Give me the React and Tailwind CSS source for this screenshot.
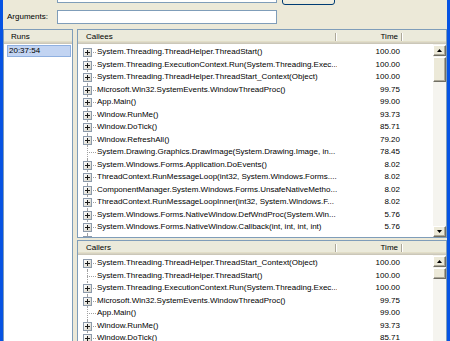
import React from 'react';

const callees = [
  { name: 'System.Threading.ThreadHelper.ThreadStart()', time: '100.00', kids: true },
  { name: 'System.Threading.ExecutionContext.Run(System.Threading.Exec...', time: '100.00', kids: true },
  { name: 'System.Threading.ThreadHelper.ThreadStart_Context(Object)', time: '100.00', kids: true },
  { name: 'Microsoft.Win32.SystemEvents.WindowThreadProc()', time: '99.75', kids: true },
  { name: 'App.Main()', time: '99.00', kids: true },
  { name: 'Window.RunMe()', time: '93.73', kids: true },
  { name: 'Window.DoTick()', time: '85.71', kids: true },
  { name: 'Window.RefreshAll()', time: '79.20', kids: true },
  { name: 'System.Drawing.Graphics.DrawImage(System.Drawing.Image, in...', time: '78.45', kids: false },
  { name: 'System.Windows.Forms.Application.DoEvents()', time: '8.02', kids: true },
  { name: 'ThreadContext.RunMessageLoop(int32, System.Windows.Forms....', time: '8.02', kids: true },
  { name: 'ComponentManager.System.Windows.Forms.UnsafeNativeMetho...', time: '8.02', kids: true },
  { name: 'ThreadContext.RunMessageLoopInner(int32, System.Windows.F...', time: '8.02', kids: true },
  { name: 'System.Windows.Forms.NativeWindow.DefWndProc(System.Win...', time: '5.76', kids: true },
  { name: 'System.Windows.Forms.NativeWindow.Callback(int, int, int, int)', time: '5.76', kids: true },
  { name: 'System.Windows.Forms.Form.DefWndProc(System.Windows.For...', time: '5.76', kids: true },
];

const callers = [
  { name: 'System.Threading.ThreadHelper.ThreadStart_Context(Object)', time: '100.00', kids: true },
  { name: 'System.Threading.ThreadHelper.ThreadStart()', time: '100.00', kids: false },
  { name: 'System.Threading.ExecutionContext.Run(System.Threading.Exec...', time: '100.00', kids: true },
  { name: 'Microsoft.Win32.SystemEvents.WindowThreadProc()', time: '99.75', kids: true },
  { name: 'App.Main()', time: '99.00', kids: false },
  { name: 'Window.RunMe()', time: '93.73', kids: true },
  { name: 'Window.DoTick()', time: '85.71', kids: true },
  { name: 'Window.RefreshAll()', time: '79.20', kids: true },
];

const PlusBox = () => (
  <div className="absolute left-[5px] top-[2px] h-[9px] w-[9px] border border-[#8c9aab] bg-linear-to-br from-white to-[#d6d3c6]">
    <div className="absolute left-[1px] top-[3px] h-px w-[5px] bg-[#1a1a1a]" />
    <div className="absolute left-[3px] top-[1px] h-[5px] w-px bg-[#1a1a1a]" />
  </div>
);

const TreeRow = ({ row, first }) => (
  <div className="relative flex h-[12.5px] items-center leading-[12.5px]">
    {/* tree lines */}
    <div
      className={
        first
          ? 'absolute bottom-0 left-[9px] top-[6px] border-l border-dotted border-[#a0a0a0]'
          : 'absolute bottom-0 left-[9px] top-0 border-l border-dotted border-[#a0a0a0]'
      }
    />
    <div className="absolute left-[9px] top-[6px] w-[9px] border-t border-dotted border-[#a0a0a0]" />
    {row.kids && <PlusBox />}
    <div className="ml-[19px] w-[240px] overflow-hidden whitespace-nowrap">{row.name}</div>
    <div className="w-[66px] pr-[3px] text-right">{row.time}</div>
  </div>
);

const Sep = () => (
  <div className="absolute right-0 top-[3px] bottom-[3px] w-[2px] border-l border-r border-l-[#aca899] border-r-white" />
);

const ListHeader = ({ title }) => (
  <div className="flex h-[14px] shrink-0 items-center bg-[#ebeadb] leading-none shadow-[inset_0_-1px_0_#cbc7b8,inset_0_-2px_0_#d6d2c2,inset_0_-3px_0_#e2dec8]">
    <div className="relative flex h-full w-[259px] items-center pl-[8px]">
      {title}
      <Sep />
    </div>
    <div className="relative flex h-full w-[66px] items-center justify-end pr-[5px]">
      Time
      <Sep />
    </div>
  </div>
);

const Arrow = ({ down }) => (
  <svg width="5" height="3" viewBox="0 0 5 3" className={down ? 'rotate-180' : ''}>
    <polygon points="0,3 2.5,0 5,3" fill="#000" />
  </svg>
);

const ScrollButton = ({ down }) => (
  <div className="flex h-[11px] w-[13px] shrink-0 items-center justify-center border border-t-white border-l-white border-r-[#716f64] border-b-[#716f64] bg-[#ece9d8] shadow-[inset_-1px_-1px_0_#aca899]">
    <Arrow down={down} />
  </div>
);

const ScrollBar = ({ thumb }) => (
  <div className="flex w-[13px] shrink-0 flex-col bg-[#f5f4ef] pt-[1px]">
    <ScrollButton />
    <div className="flex-1">
      <div
        className={
          thumb === 'big'
            ? 'mt-[1px] h-[25px] border border-t-white border-l-white border-r-[#716f64] border-b-[#716f64] bg-[#ece9d8] shadow-[inset_-1px_-1px_0_#aca899]'
            : 'mt-[1px] h-[11px] border border-t-white border-l-white border-r-[#716f64] border-b-[#716f64] bg-[#ece9d8] shadow-[inset_-1px_-1px_0_#aca899]'
        }
      />
    </div>
    <ScrollButton down />
  </div>
);

const TreeList = ({ title, rows, thumb, className }) => (
  <div className={`flex flex-col overflow-hidden border border-[#7f9db9] bg-white ${className}`}>
    <ListHeader title={title} />
    <div className="flex min-h-0 flex-1">
      <div className="flex-1 overflow-hidden pt-[2px]">
        {rows.map((r, i) => (
          <TreeRow key={i} row={r} first={i === 0} />
        ))}
      </div>
      <ScrollBar thumb={thumb} />
    </div>
  </div>
);

export default function App() {
  return (
    <div className="flex h-[341px] w-[450px] overflow-hidden bg-[#0653e3] text-[8px] text-black [font-family:'Liberation_Sans',Arial,sans-serif]">
      <div className="mx-[3px] flex min-w-0 flex-1 flex-col bg-[#ece9d8]">
        {/* Application / Arguments */}
        <div className="-mt-[13px] shrink-0 pl-[4px]">
          <div className="flex h-[18px] items-end">
            <span className="mb-[5px] w-[50px] leading-none">Application:</span>
            <div className="mb-[2px] h-[14px] w-[220px] border border-[#7f9db9] bg-white" />
            <button className="ml-[5px] h-[18px] w-[53px] rounded-[3px] border border-[#003c74] bg-linear-to-b from-white to-[#ece9d8]" />
          </div>
          <div className="mt-[5px] flex h-[14px] items-center">
            <span className="w-[50px] leading-none">Arguments:</span>
            <div className="h-[14px] w-[220px] border border-[#7f9db9] bg-white" />
          </div>
        </div>

        {/* Panels */}
        <div className="mt-[5px] flex min-h-0 flex-1">
          <div className="flex h-[340px] w-[70px] shrink-0 flex-col border border-[#7f9db9] bg-white">
            <div className="flex h-[14px] shrink-0 items-center bg-[#ebeadb] pl-[7px] leading-none shadow-[inset_0_-1px_0_#cbc7b8,inset_0_-2px_0_#d6d2c2,inset_0_-3px_0_#e2dec8]">
              Runs
            </div>
            <div className="ml-[3px] mt-[1px] flex h-[12px] w-[64px] items-center border border-[#8fb0e0] bg-[#c2d4f2] pl-[1px] leading-none">
              20:37:54
            </div>
          </div>
          <div className="ml-[4px] flex min-w-0 flex-1 flex-col">
            <TreeList title="Callees" rows={callees} thumb="big" className="h-[209px] shrink-0" />
            <TreeList title="Callers" rows={callers} thumb="small" className="mt-[2px] h-[130px] shrink-0" />
          </div>
        </div>
      </div>
    </div>
  );
}
